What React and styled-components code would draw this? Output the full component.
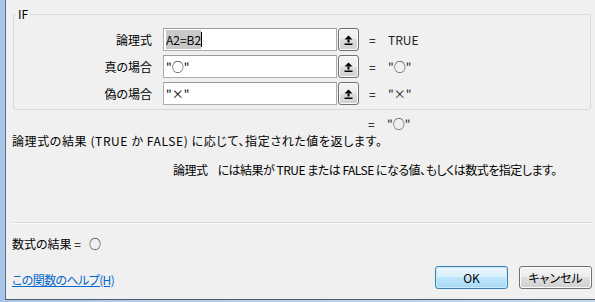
import React from "react";
import styled, { createGlobalStyle } from "styled-components";

const GlobalStyle = createGlobalStyle`
  html, body {
    margin: 0;
    padding: 0;
  }
  body {
    background: #f0f0f0;
    font-family: "Noto Sans CJK JP", "Noto Sans", sans-serif;
    font-size: 12px;
    color: #000;
    font-feature-settings: "palt";
  }
`;

const Window = styled.div`
  width: 595px;
  height: 302px;
  display: grid;
  grid-template-columns: 5px 1fr;
  grid-template-rows: 300px 2px;
  background: linear-gradient(to right, #a7c6ea, #c2d8f2);
`;

const Dialog = styled.div`
  grid-column: 2;
  grid-row: 1;
  box-sizing: border-box;
  background: #f0f0f0;
  border-left: 1px solid #5f6b79;
  border-bottom: 1px solid #4f5a67;
  padding: 7px 4px 0 6px;
  display: flex;
  flex-direction: column;
  overflow: hidden;
`;

const Group = styled.fieldset`
  margin: 0 0 0 1px;
  border: 1px solid #d3dbe2;
  border-radius: 3px;
  padding: 0 0 4px 4px;
  min-width: 0;
`;

const Legend = styled.legend`
  padding: 0 2px;
  margin-left: -2px;
  line-height: 14px;
`;

const ArgList = styled.div`
  margin-top: 7px;
  display: flex;
  flex-direction: column;
  gap: 4px;
`;

const Row = styled.div`
  display: flex;
  align-items: center;
  height: 23px;
`;

const Label = styled.div`
  width: 134px;
  text-align: right;
`;

const Field = styled.div`
  box-sizing: border-box;
  margin-left: 11px;
  width: 174px;
  height: 23px;
  border: 1px solid #abadb3;
  border-top-color: #9a9ca2;
  background: #fff;
  padding: 0 2px;
  display: flex;
  align-items: center;
  white-space: nowrap;
`;

const Selected = styled.span`
  background: #c8c8c8;
  padding: 1px 0;
`;

const Caret = styled.span`
  display: inline-block;
  width: 1px;
  height: 15px;
  background: #000;
`;

const RefButton = styled.div`
  box-sizing: border-box;
  margin-left: 1px;
  width: 21px;
  height: 23px;
  border: 1px solid #707070;
  border-radius: 3px;
  background: linear-gradient(#f4f4f4 0%, #ececec 50%, #dedede 50%, #d0d0d0 100%);
  box-shadow: inset 0 0 0 1px #fbfbfb;
  display: flex;
  align-items: center;
  justify-content: center;
`;

const Eq = styled.span`
  margin-left: ${(p) => p.$offset ?? 10}px;
  width: 9px;
`;

const Value = styled.span`
  margin-left: 10px;
  color: #222;
`;

const ResultLine = styled.div`
  margin-top: 6px;
  line-height: 16px;
  padding-left: 356px;
  display: flex;
`;

const Desc = styled.div`
  margin-top: ${(p) => p.$top}px;
  padding-left: ${(p) => p.$indent || 0}px;
  letter-spacing: ${(p) => p.$spacing || 0}px;
  line-height: 16px;
  white-space: nowrap;
`;

const ArgName = styled.span`
  margin-right: 10px;
`;

const Separator = styled.div`
  margin-top: 44px;
  margin-right: -2px;
  height: 1px;
  background: #d6dce2;
  box-shadow: 0 1px 0 #fafafa;
`;

const FormulaResult = styled.div`
  margin-top: 13px;
  line-height: 16px;
  display: flex;
`;

const ResultMark = styled.span`
  margin-left: 8px;
`;

const Footer = styled.div`
  margin-top: 14px;
  display: flex;
  justify-content: space-between;
  align-items: flex-start;
`;

const HelpLink = styled.a`
  margin-top: 6px;
  line-height: 16px;
  letter-spacing: -0.6px;
  color: #0066cc;
  text-decoration: underline;
  cursor: pointer;
`;

const Buttons = styled.div`
  display: flex;
  gap: 11px;
  margin-right: -1px;
`;

const Button = styled.button`
  box-sizing: border-box;
  width: 73px;
  height: 23px;
  padding: 0;
  font: inherit;
  color: #000;
  border-radius: 3px;
  border: 1px solid ${(p) => (p.$primary ? "#3c7fb1" : "#707070")};
  background: ${(p) =>
    p.$primary
      ? "linear-gradient(#eaf6fd 0%, #d9f0fc 50%, #bee6fd 50%, #a7d9f5 100%)"
      : "linear-gradient(#f4f4f4 0%, #ececec 50%, #dedede 50%, #d0d0d0 100%)"};
  box-shadow: inset 0 0 0 1px ${(p) => (p.$primary ? "#c8ecfc" : "#fbfbfb")};
`;

const ArrowIcon = () => (
  <svg width="9" height="10" viewBox="0 0 9 10">
    <polygon points="4.5,0.5 8.5,4.5 0.5,4.5" fill="#000" />
    <rect x="3.5" y="4.5" width="2" height="3" fill="#000" />
    <rect x="0.5" y="8.5" width="8" height="1.5" fill="#000" />
  </svg>
);

const args = [
  { label: "論理式", value: "TRUE", selected: true, text: "A2=B2" },
  { label: "真の場合", value: '"○"', text: '"○"' },
  { label: "偽の場合", value: '"×"', text: '"×"' },
];

export default function App() {
  return (
    <>
      <GlobalStyle />
      <Window>
        <Dialog>
          <Group>
            <Legend>IF</Legend>
            <ArgList>
              {args.map((a) => (
                <Row key={a.label}>
                  <Label>{a.label}</Label>
                  <Field>
                    {a.selected ? (
                      <>
                        <Selected>{a.text}</Selected>
                        <Caret />
                      </>
                    ) : (
                      a.text
                    )}
                  </Field>
                  <RefButton>
                    <ArrowIcon />
                  </RefButton>
                  <Eq>=</Eq>
                  <Value>{a.value}</Value>
                </Row>
              ))}
            </ArgList>
          </Group>
          <ResultLine>
            <Eq $offset={0}>=</Eq>
            <Value>"○"</Value>
          </ResultLine>
          <Desc $top={1} $spacing={0.6}>
            論理式の結果 (TRUE か FALSE) に応じて、指定された値を返します。
          </Desc>
          <Desc $top={13} $indent={161} $spacing={-0.5}>
            <ArgName>論理式</ArgName>
            には結果が TRUE または FALSE になる値、もしくは数式を指定します。
          </Desc>
          <Separator />
          <FormulaResult>
            数式の結果 =<ResultMark>○</ResultMark>
          </FormulaResult>
          <Footer>
            <HelpLink>この関数のヘルプ(H)</HelpLink>
            <Buttons>
              <Button $primary>OK</Button>
              <Button>キャンセル</Button>
            </Buttons>
          </Footer>
        </Dialog>
      </Window>
    </>
  );
}
